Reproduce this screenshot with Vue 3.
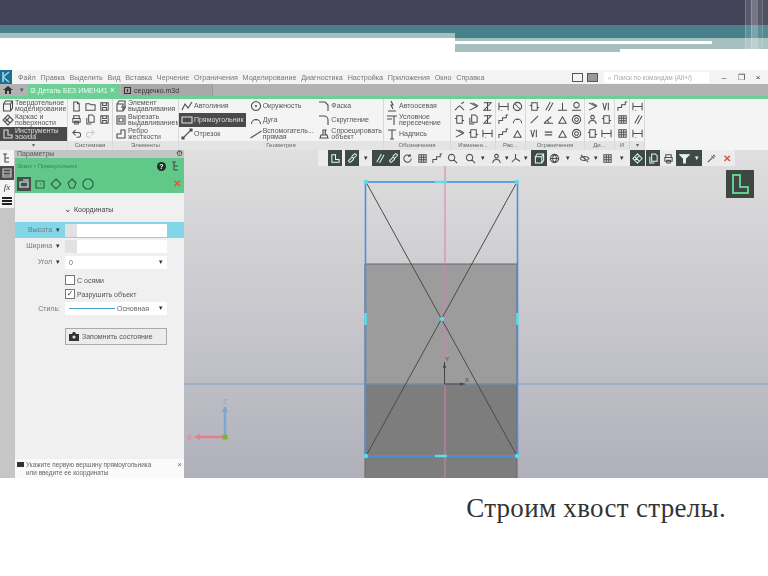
<template>
  <div class="slide">
    <!-- шапка слайда -->
    <header class="head">
      <div class="head-dark"></div>
      <div class="head-bands">
        <div class="band-left"></div>
        <div class="band-right">
          <div class="b-teal"></div>
          <div class="b-light"></div>
          <div class="b-white"></div>
          <div class="b-bottom"></div>
        </div>
      </div>
      <div class="stripes"><i></i><i></i><i></i><i></i></div>
    </header>

    <!-- снимок окна КОМПАС -->
    <section class="cad">
      <div class="menubar">
        <span class="logo"><svg width="12" height="14" viewBox="0 0 12 14"><path d="M3 2v10M3 7l6-5M3 7l6 5" stroke="#9fd8e6" stroke-width="1.6" fill="none"/></svg></span>
        <span v-for="m in menu" :key="m" class="menu-item">{{ m }}</span>
        <span class="menu-right">
          <i class="win-box"></i>
          <i class="win-box dark"></i>
          <span class="search">⌕ Поиск по командам (Alt+/)</span>
          <span class="win-btn">–</span>
          <span class="win-btn">❐</span>
          <span class="win-btn">×</span>
        </span>
      </div>

      <div class="tabs">
        <span class="home"><svg width="10" height="10" viewBox="0 0 10 10"><path d="M0 5 5 1l5 4H8v4H6V6H4v3H2V5z" fill="#333"/></svg></span>
        <span class="tab-caret">▾</span>
        <span class="tab active"><svg class="tab-ico" viewBox="0 0 12 12"><path d="M2 2h8v8H2zM4 6l2 2 3-4" /></svg>Деталь БЕЗ ИМЕНИ1 <b>×</b></span>
        <span class="tab plain"><svg class="tab-ico" viewBox="0 0 12 12"><path d="M2 2h8v8H2zM6 4v4" /></svg>сердечко.m3d</span>
      </div>

      <div class="ribbon">
        <div class="group g-first">
          <div class="g-body">
            <div v-for="(t, i) in firstTools" :key="t.t" class="tool narrow" :class="{ on: i === 2 }">
              <svg class="ico" viewBox="0 0 12 12"><path :d="icons[t.i]" /></svg>
              <span>{{ t.t }}</span>
            </div>
          </div>
          <div class="g-foot"><span>▾</span></div>
        </div>

        <div class="group g-sys">
          <div class="g-grid three">
            <svg v-for="(n, k) in sysIcons" :key="k" class="ico grid-ico" :class="{ faint: k === 7 }" viewBox="0 0 12 12"><path :d="icons[n]" /></svg>
          </div>
          <div class="g-foot"><span>Системная</span></div>
        </div>

        <div v-for="g in textGroups" :key="g.name" class="group" :style="{ width: g.w + 'px' }">
          <div class="g-cols">
            <div v-for="(col, c) in g.cols" :key="c" class="g-col">
              <div v-for="t in col" :key="t.t" class="tool" :class="{ on: t.t === 'Прямоугольник' }">
                <svg class="ico" viewBox="0 0 12 12"><path :d="icons[t.i]" /></svg>
                <span>{{ t.t }}</span>
              </div>
            </div>
          </div>
          <div class="g-foot"><span>{{ g.name }}</span></div>
        </div>

        <div v-for="g in iconGroups" :key="g.name" class="group" :style="{ width: g.w + 'px' }">
          <div class="g-grid" :style="{ gridTemplateColumns: 'repeat(' + g.n + ', 1fr)' }">
            <svg v-for="(n, k) in g.list" :key="k" class="ico grid-ico" viewBox="0 0 12 12"><path :d="icons[n]" /></svg>
          </div>
          <div class="g-foot"><span>{{ g.name }}</span></div>
        </div>
        <div class="ribbon-rest"></div>
      </div>

      <div class="work">
        <aside class="side">
          <span class="side-btn tall"><svg class="ico" viewBox="0 0 12 12"><path d="M2 2h4M4 2v8h4M4 6h4" /></svg></span>
          <span class="side-btn dark"><svg class="ico" viewBox="0 0 12 12"><path d="M2 2h8v8H2zM2 5h8M2 8h8" /></svg></span>
          <span class="side-btn fx">fx</span>
          <span class="side-btn"><svg class="ico thick" viewBox="0 0 12 12"><path d="M1 3h10M1 6h10M1 9h10" /></svg></span>
        </aside>

        <div class="panel">
          <div class="panel-title">
            <span>Параметры</span>
            <span class="gear">⚙</span>
          </div>
          <div class="panel-green">
            <div class="crumb">
              <span>Эскиз &gt; Прямоугольник</span>
              <span class="help">?</span>
              <svg class="ico" viewBox="0 0 12 12"><path d="M2 2h4M4 2v8h4M4 6h4" /></svg>
            </div>
            <div class="mode-row">
              <span class="mode on"><svg class="ico" viewBox="0 0 12 12"><path d="M2 4h8v5H2zM5 2h6" /></svg></span>
              <span class="mode"><svg class="ico" viewBox="0 0 12 12"><path d="M2 3h8v7H2zM6 6h1" /></svg></span>
              <span class="mode"><svg class="ico" viewBox="0 0 12 12"><path d="M6 1l5 5-5 5-5-5z" /></svg></span>
              <span class="mode"><svg class="ico" viewBox="0 0 12 12"><path d="M6 1l4 4-2 5H4L2 5z" /></svg></span>
              <span class="mode"><svg class="ico" viewBox="0 0 12 12"><path d="M4 1h4l3 3v4l-3 3H4L1 8V4z" /></svg></span>
              <span class="close">✕</span>
            </div>
          </div>

          <div class="coords"><span class="chev">⌄</span> Координаты</div>

          <div class="row hl">
            <label>Высота <em>▾</em></label>
            <div class="field"><i></i></div>
          </div>
          <div class="row">
            <label>Ширина <em>▾</em></label>
            <div class="field"><i></i></div>
          </div>
          <div class="row">
            <label>Угол <em>▾</em></label>
            <div class="field sel"><span>0</span><em>▾</em></div>
          </div>

          <div class="check first"><i></i>С осями</div>
          <div class="check"><i class="yes">✓</i>Разрушить объект</div>

          <div class="row style">
            <label>Стиль:</label>
            <div class="field sel"><b class="line"></b><span>Основная</span><em>▾</em></div>
          </div>

          <div class="save">
            <svg width="10" height="9" viewBox="0 0 10 9"><path d="M0 2h3l1-2h2l1 2h3v7H0z" fill="#333"/><circle cx="5" cy="5" r="1.6" fill="#ddd"/></svg>
            Запомнить состояние
          </div>

          <div class="hint">
            <span class="bubble"></span>
            <p>Укажите первую вершину прямоугольника<br>или введите ее координаты</p>
            <span class="hint-x">×</span>
          </div>
        </div>

        <div class="canvas">
          <!-- сцена: координаты здесь и есть содержимое -->
          <svg class="scene" width="584" height="328" viewBox="184 150 584 328">
            <rect x="365" y="264" width="152" height="120" fill="#9c9c9c" />
            <rect x="365" y="384" width="152" height="94" fill="#7d7d7d" />
            <path d="M365 264H517M365 384H517M365 264V478M517 264V478" stroke="#666" stroke-width="1" fill="none" />
            <line x1="184" y1="384" x2="768" y2="384" stroke="#7d9fc8" />
            <line x1="445" y1="150" x2="445" y2="478" stroke="#d77fb2" />
            <path d="M366 182 517 456M517 182 366 456" stroke="#4a4a4a" stroke-width="1" fill="none" />
            <rect x="365.5" y="182" width="152" height="274" stroke="#4a90dc" stroke-width="1.6" fill="none" />
            <path d="M435 182h12M435 456h12" stroke="#5fdde8" stroke-width="2.5" />
            <path d="M365.5 313v12M517.5 313v12" stroke="#5fdde8" stroke-width="2.5" />
            <circle v-for="p in points" :key="p[0] + '-' + p[1]" :cx="p[0]" :cy="p[1]" r="2.2" fill="#4fe0e8" />
            <path d="M444.5 384v-22M444 384h16" stroke="#444" fill="none" />
            <path d="M443 368l1.500-6 1.500 6zM460 382.500l6 1.500-6 1.500z" fill="#444" />
            <text x="445" y="361" class="axis">Y</text>
            <text x="465" y="382" class="axis">X</text>
            <path d="M225 437v-30" stroke="#7aa6d8" stroke-width="2.500" />
            <path d="M222 412l3-6 3 6z" fill="#7aa6d8" />
            <path d="M224 437h-28" stroke="#e0808e" stroke-width="2.500" />
            <path d="M200 434l-6 3 6 3z" fill="#e0808e" />
            <rect x="222.500" y="434.500" width="5" height="5" fill="#84b030" />
            <text x="223" y="404" class="gizmo blue">Z</text>
            <text x="187" y="440" class="gizmo red">X</text>
          </svg>

          <div class="bar">
            <span v-for="(b, i) in barButtons" :key="i" class="bar-btn" :class="b.k" :style="{ width: b.w + 'px' }">
              <svg v-if="b.d" class="ico" viewBox="0 0 12 12"><path :d="b.d" /></svg>
              <template v-if="b.k === 'caret' || b.k === 'dark caret'">▾</template>
              <template v-if="b.k === 'redx'">✕</template>
            </span>
          </div>

          <div class="orient">
            <svg width="28" height="28" viewBox="0 0 28 28"><path d="M7 5h7v12h8v6H7z" fill="none" stroke="#5fcf8c" stroke-width="2" /></svg>
          </div>
        </div>
      </div>
    </section>

    <p class="caption">Строим хвост стрелы.</p>
  </div>
</template>

<script setup>
const menu = ['Файл', 'Правка', 'Выделить', 'Вид', 'Вставка', 'Черчение', 'Ограничения', 'Моделирование', 'Диагностика', 'Настройка', 'Приложения', 'Окно', 'Справка']

// набор мелких значков для ленты
const icons = {
  cube: 'M1.500 4h7v7h-7zM1.500 4l2-3h7v7l-2 3M8.500 4l2-3',
  wire: 'M6 1l5 5-5 5-5-5zM3 4l5 5M8 3L3 8',
  sketch: 'M2 2h4v5h4v3H2z',
  doc: 'M3 1h4l2 2v8H3zM7 1v2h2',
  folder: 'M1 3h4l1 1h5v6H1z',
  save: 'M2 2h8v8H2zM4 2v3h4V2M4 10V7h4v3',
  print: 'M3 5V2h6v3M2 5h8v4H2zM4 8h4v3H4z',
  copy: 'M4 1h4l2 2v6H4zM2 4v7h5',
  undo: 'M5 2L2 5l3 3M2 5h6a2 2 0 0 1 0 5H6',
  redo: 'M7 2l3 3-3 3M10 5H4a2 2 0 0 0 0 5h2',
  extrude: 'M2 4h6v7H2zM2 4l2-3h6v7l-2 3M6 7h5',
  cut: 'M2 2h8v8H2zM4 4h4v4H4z',
  rib: 'M2 10h8V2H6v4H2z',
  polyline: 'M1 10l3-6 3 4 4-6',
  rect: 'M1 3h10v6H1zM1 3h1M10 9h1',
  line: 'M1.500 10.500l9-9M1 9h2v2H1zM9 1h2v2H9z',
  circle: 'M6 1.500a4.500 4.500 0 1 0 .01 0M6 5v2M5 6h2',
  arc: 'M1.500 10a4.500 4.500 0 0 1 9 0M6 5.500v1',
  auxline: 'M0.500 10l11-7',
  chamfer: 'M1 2h6l3 3v6',
  fillet: 'M1 2h5a4 4 0 0 1 4 4v5',
  project: 'M2 10h8l-1-3H3zM5 7V2h3l-1 2 1 3',
  axis: 'M5 1l2 4H5l2 4M2 11h8',
  cond: 'M1 2h10M8 2v9M1 5h5',
  text: 'M2 2h8M6 2v9M4 11h4',
  trim: 'M1 10l5-5M8 3l3-2M6 5l5 5',
  offset: 'M2 2l8 4-8 4M5 2l6 3',
  mirror: 'M2 2h8l-8 8h8M6 1v10',
  box: 'M3 2h6v8H3zM1 5h2M9 7h2',
  step: 'M1 11V7h4V4h4V1h2',
  angle: 'M1 10h10M1 10l8-7M6 10a5 5 0 0 0-1-3',
  par: 'M3 10l5-9M6 11l5-9',
  perp: 'M1 10h10M6 10V2',
  tangent: 'M6 1.500a3 3 0 1 0 .01 0M1 10h10',
  tri: 'M2 10h8L6 3z',
  eq: 'M2 4.500h8M2 7.500h8',
  slash: 'M2 10l8-8',
  target: 'M6 1.500a4.500 4.500 0 1 0 .01 0M6 4a2 2 0 1 0 .01 0',
  vee: 'M2 2l2 8 2-8M8 2v8',
  noent: 'M6 1.500a4.500 4.500 0 1 0 .01 0M3 3l6 6',
  dim: 'M1 2v8M11 2v8M1 6h10M4 10v1',
  rotate: 'M10 6a4 4 0 1 1-1.500-3M9 1v2.500H6.500',
  grid: 'M2 2h8v8H2zM2 4.700h8M2 7.300h8M4.700 2v8M7.300 2v8',
  zoom: 'M5 1.500a3.500 3.500 0 1 0 .01 0M7.500 7.500l3.500 3.500',
  chain: 'M2 8l3-3a1.500 1.500 0 0 1 2 2L4 10a1.500 1.500 0 0 1-2-2M5 4l3-3a1.500 1.500 0 0 1 2 2L7 6',
  person: 'M6 1.500a2 2 0 1 0 .01 0M2 11c0-3 2-4 4-4s4 1 4 4',
  triad: 'M6 6V1M6 6l-4 4M6 6l5 3',
  sphere: 'M6 1.500a4.500 4.500 0 1 0 .01 0M1.500 6h9M6 1.500c-3 3-3 6 0 9M6 1.500c3 3 3 6 0 9',
  eye: 'M1 6c2-3 8-3 10 0-2 3-8 3-10 0M6 5v2M2 2l8 8',
  funnel: 'M1 2h10L7 6v5H5V6z',
  dropper: 'M2 10l5-5M6 3l3 3M8 2l2 2'
}

const firstTools = [
  { t: 'Твердотельное моделирование', i: 'cube' },
  { t: 'Каркас и поверхности', i: 'wire' },
  { t: 'Инструменты эскиза', i: 'sketch' }
]

const sysIcons = ['doc', 'folder', 'save', 'print', 'copy', 'save', 'undo', 'redo']

const textGroups = [
  { name: 'Элементы', w: 66, cols: [[{ t: 'Элемент выдавливания', i: 'extrude' }, { t: 'Вырезать выдавливанием', i: 'cut' }, { t: 'Ребро жесткости', i: 'rib' }]] },
  {
    name: 'Геометрия',
    w: 205,
    cols: [
      [{ t: 'Автолиния', i: 'polyline' }, { t: 'Прямоугольник', i: 'rect' }, { t: 'Отрезок', i: 'line' }],
      [{ t: 'Окружность', i: 'circle' }, { t: 'Дуга', i: 'arc' }, { t: 'Вспомогатель... прямая', i: 'auxline' }],
      [{ t: 'Фаска', i: 'chamfer' }, { t: 'Скругление', i: 'fillet' }, { t: 'Спроецировать объект', i: 'project' }]
    ]
  },
  { name: 'Обозначения', w: 67, cols: [[{ t: 'Автоосевая', i: 'axis' }, { t: 'Условное пересечение', i: 'cond' }, { t: 'Надпись', i: 'text' }]] }
]

const iconGroups = [
  { name: 'Изменен...', w: 45, n: 3, list: ['trim', 'offset', 'mirror', 'box', 'copy', 'mirror', 'offset', 'box', 'dim'] },
  { name: 'Рас...', w: 30, n: 2, list: ['dim', 'noent', 'step', 'arc', 'step', 'tri'] },
  { name: 'Ограничения', w: 59, n: 4, list: ['box', 'par', 'perp', 'tangent', 'slash', 'angle', 'tri', 'target', 'vee', 'eq', 'tri', 'target'] },
  { name: 'Ди...', w: 30, n: 2, list: ['offset', 'vee', 'person', 'box', 'box', 'dim'] },
  { name: 'И', w: 15, n: 1, list: ['step', 'grid', 'grid'] },
  { name: '▾', w: 15, n: 1, list: ['dim', 'par', 'dim'] }
]

const points = [[366, 182], [517, 182], [366, 456], [517, 456], [442, 319]]

// панель над сценой, ширины как в окне программы
const barButtons = [
  { k: 'grip', w: 10 },
  { k: 'dark', w: 14, d: icons.sketch },
  { k: 'plain', w: 3 },
  { k: 'dark', w: 14, d: icons.chain },
  { k: 'caret', w: 13 },
  { k: 'dark', w: 14, d: icons.par },
  { k: 'dark', w: 14, d: icons.chain },
  { k: 'plain', w: 15, d: icons.rotate },
  { k: 'plain', w: 15, d: icons.grid },
  { k: 'plain', w: 15, d: icons.step },
  { k: 'plain', w: 15, d: icons.zoom },
  { k: 'plain', w: 3 },
  { k: 'plain', w: 14, d: icons.zoom },
  { k: 'caret', w: 12 },
  { k: 'plain', w: 15, d: icons.person },
  { k: 'caret', w: 5 },
  { k: 'plain', w: 12, d: icons.triad },
  { k: 'caret', w: 10 },
  { k: 'dark', w: 16, d: icons.cube },
  { k: 'plain', w: 15, d: icons.sphere },
  { k: 'caret', w: 12 },
  { k: 'plain', w: 3 },
  { k: 'plain', w: 14, d: icons.eye },
  { k: 'caret', w: 9 },
  { k: 'plain', w: 14, d: icons.grid },
  { k: 'caret', w: 16 },
  { k: 'dark', w: 15, d: icons.wire },
  { k: 'plain', w: 1 },
  { k: 'dark', w: 14, d: icons.copy },
  { k: 'plain', w: 16, d: icons.print },
  { k: 'dark solid', w: 16, d: icons.funnel },
  { k: 'dark caret', w: 10 },
  { k: 'plain', w: 18, d: icons.dropper },
  { k: 'redx', w: 14 }
]
</script>

<style scoped>
.slide {
  position: relative;
  width: 768px;
  height: 576px;
  overflow: hidden;
  background: #fff;
  font-family: "Liberation Sans", Arial, sans-serif;
}

.head {
  position: relative;
  height: 70px;
}
.head-dark {
  height: 25px;
  background: #424258;
}
.head-bands {
  display: flex;
}
.band-left {
  width: 455px;
  height: 13px;
  background: linear-gradient(#47808a 0, #47808a 8px, #a3bfc0 8px);
}
.band-right {
  flex: 1;
}
.b-teal {
  height: 13px;
  background: #47808a;
}
.b-light {
  height: 3px;
  background: #a5bfc0;
}
.b-white {
  height: 3px;
  background: linear-gradient(90deg, #fff 0, #fff 257px, #a5bfc0 257px);
}
.b-bottom {
  height: 8px;
  background: linear-gradient(#a5bfc0 0, #a5bfc0 5px, transparent 5px), linear-gradient(90deg, #a5bfc0 165px, transparent 165px);
}
.stripes {
  position: absolute;
  top: 0;
  right: 0;
  width: 23px;
  height: 52px;
  display: flex;
}
.stripes i {
  flex: 1;
  background: rgba(255, 255, 255, 0.12);
  border-left: 1px solid rgba(255, 255, 255, 0.2);
}
.stripes i:nth-child(2) {
  background: rgba(255, 255, 255, 0.28);
}
.stripes i:nth-child(4) {
  background: rgba(255, 255, 255, 0.08);
}

.cad {
  height: 408px;
  display: flex;
  flex-direction: column;
  overflow: hidden;
  filter: blur(0.45px);
  font-size: 7px;
  color: #444;
}

.menubar {
  height: 14px;
  display: flex;
  align-items: center;
  background: #f3f3f3;
  color: #777;
  white-space: nowrap;
}
.logo {
  width: 12px;
  height: 14px;
  background: #1d6f95;
  margin-right: 6px;
}
.menu-item {
  margin-right: 4.8px;
  font-size: 7.2px;
}
.menu-right {
  margin-left: auto;
  display: flex;
  align-items: center;
}
.win-box {
  width: 9px;
  height: 7px;
  border: 1px solid #555;
  margin-right: 4px;
}
.win-box.dark {
  background: #999;
}
.search {
  width: 105px;
  height: 11px;
  line-height: 11px;
  background: #fff;
  color: #aaa;
  padding-left: 4px;
  margin: 0 8px 0 2px;
  box-sizing: border-box;
  font-size: 6.5px;
}
.win-btn {
  width: 14px;
  margin-right: 3px;
  text-align: center;
  font-size: 8px;
  color: #333;
}

.tabs {
  height: 12px;
  display: flex;
  align-items: stretch;
  background: #b2b2b2;
  border-bottom: 3px solid #6dcf96;
}
.home {
  width: 14px;
  display: flex;
  align-items: center;
  justify-content: center;
  margin-left: 1px;
}
.tab-caret {
  width: 13px;
  line-height: 12px;
  color: #555;
  text-align: center;
}
.tab {
  display: flex;
  align-items: center;
  padding-left: 2px;
  gap: 2px;
  white-space: nowrap;
}
.tab-ico {
  width: 9px;
  height: 9px;
  fill: none;
  stroke: currentColor;
  stroke-width: 1.4;
}
.tab.active {
  width: 92px;
  box-sizing: border-box;
  background: #6dcf96;
  color: #eafff2;
}
.tab.active b {
  margin-left: auto;
  margin-right: 5px;
  font-weight: 400;
  font-size: 9px;
}
.tab.plain {
  width: 92px;
  box-sizing: border-box;
  margin-left: 1px;
  background: #a8a8a8;
  color: #333;
  border-right: 1px solid #999;
}

.ribbon {
  height: 51px;
  display: flex;
  background: #f4f4f4;
}
.group {
  flex: none;
  display: flex;
  flex-direction: column;
  border-right: 1px solid #d8d8d8;
  box-sizing: border-box;
  overflow: hidden;
}
.g-first {
  width: 68px;
}
.g-sys {
  width: 45px;
}
.g-body,
.g-cols {
  flex: 1;
}
.g-body {
  display: flex;
  flex-direction: column;
}
.g-cols {
  display: flex;
  gap: 2px;
}
.g-col {
  flex: 1;
  min-width: 0;
  display: flex;
  flex-direction: column;
}
.g-grid {
  flex: 1;
  display: grid;
  align-items: center;
  justify-items: center;
  padding: 1px;
}
.g-grid.three {
  grid-template-columns: repeat(3, 1fr);
}
.g-foot {
  height: 9px;
  line-height: 9px;
  text-align: center;
  background: #e4e4e4;
  color: #666;
  font-size: 6px;
  white-space: nowrap;
}

.tool {
  flex: 1;
  display: flex;
  align-items: center;
  gap: 1px;
  padding-left: 2px;
  line-height: 6.5px;
  color: #555;
  min-height: 0;
}
.tool.on {
  background: #4a4a4a;
  color: #ddd;
}
.tool.on .ico {
  stroke: #ddd;
}
.ribbon-rest {
  flex: 1;
}

.ico {
  flex: none;
  width: 12px;
  height: 12px;
  fill: none;
  stroke: #4d4d4d;
  stroke-width: 1.1;
}
.ico.thick {
  stroke-width: 2;
  stroke: #222;
}
.grid-ico {
  width: 11px;
  height: 11px;
}
.grid-ico.faint {
  stroke: #ccc;
}

.work {
  flex: 1;
  min-height: 0;
  display: flex;
}

.side {
  width: 15px;
  flex: none;
  background: #c6c6c6;
  display: flex;
  flex-direction: column;
}
.side-btn {
  height: 14px;
  width: 14px;
  background: #f4f4f4;
  display: flex;
  align-items: center;
  justify-content: center;
}
.side-btn.tall {
  height: 16px;
}
.side-btn.dark {
  background: #4a4a4a;
}
.side-btn.dark .ico {
  stroke: #ccc;
}
.side-btn.fx {
  font: italic 9px "Liberation Serif", serif;
  color: #333;
}

.panel {
  width: 169px;
  flex: none;
  display: flex;
  flex-direction: column;
  background: #f0f0f0;
}
.panel-title {
  height: 8px;
  line-height: 8px;
  display: flex;
  justify-content: space-between;
  padding: 0 1px 0 2px;
  background: #c4c4c4;
  color: #555;
}
.gear {
  font-size: 8px;
  color: #444;
}
.panel-green {
  height: 35px;
  background: #60c98a;
  display: flex;
  flex-direction: column;
}
.crumb {
  height: 16px;
  display: flex;
  align-items: center;
  padding: 0 2px;
  font-size: 5.5px;
  color: #3c7f58;
}
.crumb span:first-child {
  margin-right: auto;
}
.help {
  width: 9px;
  height: 9px;
  margin-right: 4px;
  border-radius: 50%;
  background: #1f2f28;
  color: #fff;
  text-align: center;
  font: 700 7px/9px "Liberation Sans", sans-serif;
}
.mode-row {
  flex: 1;
  display: flex;
  align-items: center;
  padding-left: 2px;
}
.mode {
  width: 14px;
  height: 14px;
  margin-right: 2px;
  display: flex;
  align-items: center;
  justify-content: center;
}
.mode.on {
  background: #4d4d4d;
}
.mode.on .ico {
  stroke: #cfe;
}
.mode .ico {
  stroke: #2c5f45;
}
.close {
  margin-left: auto;
  margin-right: 3px;
  color: #d9573e;
  font-size: 10px;
  font-weight: 700;
}

.coords {
  margin: 12px 0 8px 49px;
  height: 9px;
  line-height: 9px;
  color: #444;
  font-size: 7px;
}
.chev {
  font-size: 9px;
}

.row {
  height: 16px;
  display: flex;
  align-items: center;
}
.row.hl {
  background: #82d6e8;
}
.row label {
  width: 45px;
  margin-right: 5px;
  text-align: right;
  color: #777;
  white-space: nowrap;
}
.row em {
  font-style: normal;
  color: #333;
  margin-left: 2px;
}
.field {
  width: 102px;
  height: 13px;
  background: #fff;
  display: flex;
  align-items: center;
}
.field > i {
  width: 12px;
  height: 100%;
  background: #e2e2e2;
}
.sel {
  padding: 0 4px;
  box-sizing: border-box;
  color: #666;
}
.sel em {
  margin-left: auto;
}
.line {
  width: 46px;
  height: 1px;
  background: #4aa3d0;
  margin-right: 2px;
}

.check {
  margin-left: 50px;
  height: 14px;
  display: flex;
  align-items: center;
  gap: 2px;
  color: #555;
}
.check.first {
  margin-top: 3px;
}
.check i {
  width: 8px;
  height: 8px;
  border: 1px solid #777;
  background: #fff;
  font: 8px/8px "DejaVu Sans", sans-serif;
  text-align: center;
  color: #333;
}

.style {
  margin-top: -1px;
}

.save {
  margin: 12px 0 0 50px;
  width: 102px;
  height: 17px;
  box-sizing: border-box;
  border: 1px solid #aaa;
  background: #ececec;
  display: flex;
  align-items: center;
  gap: 3px;
  padding-left: 3px;
  color: #555;
}

.hint {
  margin-top: auto;
  height: 19px;
  background: #fafafa;
  display: flex;
  padding: 2px;
  box-sizing: border-box;
  line-height: 8px;
  color: #666;
  font-size: 6.4px;
}
.hint p {
  margin: 0 0 0 2px;
  white-space: nowrap;
}
.bubble {
  width: 7px;
  height: 5px;
  background: #333;
  flex: none;
  margin-top: 1px;
}
.hint-x {
  margin-left: auto;
  font-size: 8px;
}

.canvas {
  position: relative;
  flex: 1;
  background: linear-gradient(#dfdfdf, #b0b0bb);
}
.scene {
  position: absolute;
  left: 0;
  top: 0;
}
.axis {
  font-size: 6px;
  fill: #444;
}
.gizmo {
  font-size: 7px;
}
.gizmo.blue {
  fill: #7aa6d8;
}
.gizmo.red {
  fill: #e0808e;
}

.bar {
  position: relative;
  margin-left: 134px;
  width: 417px;
  height: 16px;
  display: flex;
  background: #ececec;
}
.bar-btn {
  flex: none;
  display: flex;
  align-items: center;
  justify-content: center;
  color: #333;
  font-size: 7px;
  overflow: hidden;
}
.bar-btn .ico {
  width: 11px;
  height: 11px;
}
.bar-btn.dark {
  background: #3f4a45;
}
.bar-btn.dark.caret {
  color: #eee;
}
.bar-btn.dark .ico {
  stroke: #dfe;
}
.bar-btn.solid .ico {
  fill: #eee;
}
.bar-btn.redx {
  color: #e0504a;
  font-size: 10px;
  font-weight: 700;
}

.orient {
  position: absolute;
  left: 542px;
  top: 20px;
  width: 28px;
  height: 28px;
  background: #404643;
}

.caption {
  margin: 15px 42px 0 0;
  text-align: right;
  font-family: "Liberation Serif", serif;
  font-size: 27px;
  letter-spacing: 0.3px;
  line-height: 30px;
  color: #333;
}
</style>
